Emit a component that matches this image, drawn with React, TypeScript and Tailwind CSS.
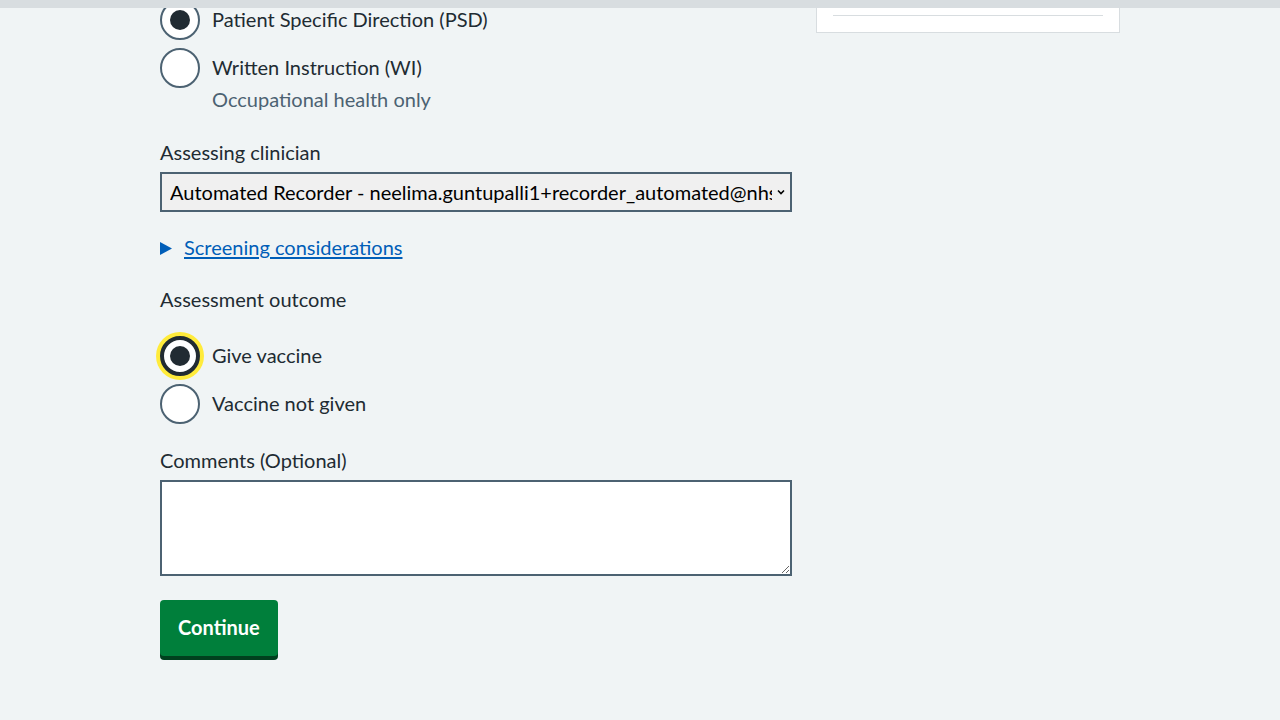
import React from "react";

const font = { fontFamily: "Lato, 'Noto Sans', sans-serif" };

function Radio({ checked, focused, label, hint }: { checked?: boolean; focused?: boolean; label: string; hint?: string }) {
  return (
    <div className="flex items-start gap-3 mb-2">
      <div
        className={
          "relative w-10 h-10 rounded-full bg-white shrink-0 flex items-center justify-center " +
          (focused
            ? "border-4 border-[#212b32] shadow-[0_0_0_4px_#ffeb3b]"
            : "border-2 border-[#4c6272]")
        }
      >
        {checked && <div className="w-5 h-5 rounded-full bg-[#212b32]" />}
      </div>
      <div className="pt-[6px]">
        <div className="text-[20px] leading-[26px] text-[#212b32]">{label}</div>
        {hint && <div className="text-[20px] leading-[26px] text-[#4c6272] mt-[6px]">{hint}</div>}
      </div>
    </div>
  );
}

export default function App() {
  return (
    <div className="min-h-[720px] bg-[#f0f4f5] relative overflow-hidden" style={font}>
      <div className="absolute top-0 left-0 right-0 h-2 bg-[#d8dde0] z-10" />
      <div className="w-[960px] mx-auto flex gap-6">
        <div className="w-[632px]">
          <Radio checked label="Patient Specific Direction (PSD)" />
          <Radio label="Written Instruction (WI)" hint="Occupational health only" />
          <div className="mt-[26px] text-[20px] leading-[28px] text-[#212b32]">Assessing clinician</div>
          <div className="mt-[6px] h-10 border-2 border-[#4c6272] bg-[#f0f0f0] flex items-center pl-2 pr-1 text-[20px] text-black">
            <span className="flex-1 whitespace-nowrap overflow-hidden">Automated Recorder - neelima.guntupalli1+recorder_automated@nhs.net</span>
            <svg width="10" height="10" viewBox="0 0 10 10" className="ml-1 shrink-0"><path d="M2 3.5 L5 6.5 L8 3.5" stroke="black" strokeWidth="1.6" fill="none" /></svg>
          </div>
          <div className="mt-[23px] flex items-center gap-3 h-[24px]">
            <svg width="12" height="13" viewBox="0 0 12 13" className="mt-[3px]"><path d="M0 0 L12 6.5 L0 13 Z" fill="#005eb8" /></svg>
            <span className="text-[20px] text-[#005eb8] underline underline-offset-2">Screening considerations</span>
          </div>
          <div className="mt-[26px] text-[20px] leading-[28px] text-[#212b32]">Assessment outcome</div>
          <div className="mt-[23px]">
            <Radio checked focused label="Give vaccine" />
            <Radio label="Vaccine not given" />
          </div>
          <div className="mt-[22px] text-[20px] leading-[28px] text-[#212b32]">Comments (Optional)</div>
          <textarea className="mt-[6px] block w-full h-24 border-2 border-[#4c6272] bg-white resize-y" />
          <button className="mt-6 h-[56px] px-[18px] pb-[3px] bg-[#007f3b] rounded-[4px] shadow-[0_4px_0_#00401e] text-white font-bold text-[20px]">
            Continue
          </button>
        </div>
        <div className="w-[304px]">
          <div className="bg-white border border-[#d8dde0] h-[33px] px-4">
            <div className="mt-[14px] border-t border-[#d8dde0]" />
          </div>
        </div>
      </div>
    </div>
  );
}
